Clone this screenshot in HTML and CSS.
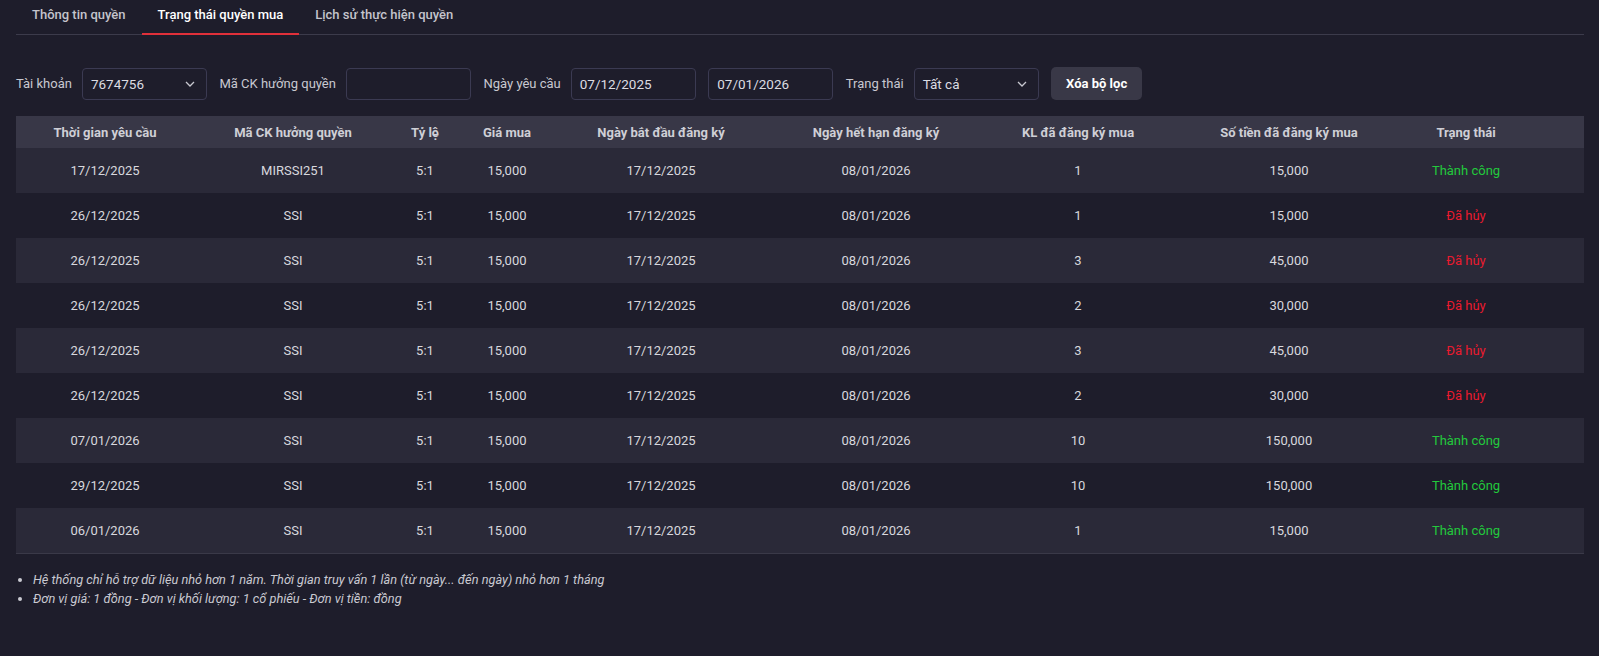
FILE: index.html
```html
<!DOCTYPE html>
<html lang="vi">

<head>
    <meta charset="UTF-8">
    <meta name="viewport" content="width=device-width, initial-scale=1.0">
    <title>Trạng thái quyền mua</title>
    <link rel="stylesheet" href="styles.css">
</head>

<body>
    <div class="page">
        <!-- tabs -->
        <div class="tabs">
            <div class="tab">Thông tin quyền</div>
            <div class="tab active">Trạng thái quyền mua</div>
            <div class="tab">Lịch sử thực hiện quyền</div>
        </div>

        <!-- bộ lọc -->
        <div class="filter">
            <label class="lbl">Tài khoản</label>
            <div class="field select">
                <span>7674756</span>
                <svg width="12" height="12" viewBox="0 0 12 12"><path d="M2 4l4 4 4-4" fill="none" stroke="#c8c8d0" stroke-width="1.3"/></svg>
            </div>
            <label class="lbl">Mã CK hưởng quyền</label>
            <div class="field"></div>
            <label class="lbl">Ngày yêu cầu</label>
            <div class="field">07/12/2025</div>
            <div class="field">07/01/2026</div>
            <label class="lbl">Trạng thái</label>
            <div class="field select">
                <span>Tất cả</span>
                <svg width="12" height="12" viewBox="0 0 12 12"><path d="M2 4l4 4 4-4" fill="none" stroke="#c8c8d0" stroke-width="1.3"/></svg>
            </div>
            <button class="btn-clear">Xóa bộ lọc</button>
        </div>

        <table class="grid">
            <colgroup>
                <col class="c1">
                <col class="c2">
                <col class="c3">
                <col class="c4">
                <col class="c5">
                <col class="c6">
                <col class="c7">
                <col class="c8">
                <col class="c9">
                <col class="c10">
            </colgroup>
            <thead>
                <tr>
                    <th>Thời gian yêu cầu</th>
                    <th>Mã CK hưởng quyền</th>
                    <th>Tỷ lệ</th>
                    <th>Giá mua</th>
                    <th>Ngày bắt đầu đăng ký</th>
                    <th>Ngày hết hạn đăng ký</th>
                    <th>KL đã đăng ký mua</th>
                    <th>Số tiền đã đăng ký mua</th>
                    <th>Trạng thái</th>
                    <th></th>
                </tr>
            </thead>
            <tbody>
                <tr><td>17/12/2025</td><td>MIRSSI251</td><td>5:1</td><td>15,000</td><td>17/12/2025</td><td>08/01/2026</td><td>1</td><td>15,000</td><td class="ok">Thành công</td><td></td></tr>
                <tr><td>26/12/2025</td><td>SSI</td><td>5:1</td><td>15,000</td><td>17/12/2025</td><td>08/01/2026</td><td>1</td><td>15,000</td><td class="cancel">Đã hủy</td><td></td></tr>
                <tr><td>26/12/2025</td><td>SSI</td><td>5:1</td><td>15,000</td><td>17/12/2025</td><td>08/01/2026</td><td>3</td><td>45,000</td><td class="cancel">Đã hủy</td><td></td></tr>
                <tr><td>26/12/2025</td><td>SSI</td><td>5:1</td><td>15,000</td><td>17/12/2025</td><td>08/01/2026</td><td>2</td><td>30,000</td><td class="cancel">Đã hủy</td><td></td></tr>
                <tr><td>26/12/2025</td><td>SSI</td><td>5:1</td><td>15,000</td><td>17/12/2025</td><td>08/01/2026</td><td>3</td><td>45,000</td><td class="cancel">Đã hủy</td><td></td></tr>
                <tr><td>26/12/2025</td><td>SSI</td><td>5:1</td><td>15,000</td><td>17/12/2025</td><td>08/01/2026</td><td>2</td><td>30,000</td><td class="cancel">Đã hủy</td><td></td></tr>
                <tr><td>07/01/2026</td><td>SSI</td><td>5:1</td><td>15,000</td><td>17/12/2025</td><td>08/01/2026</td><td>10</td><td>150,000</td><td class="ok">Thành công</td><td></td></tr>
                <tr><td>29/12/2025</td><td>SSI</td><td>5:1</td><td>15,000</td><td>17/12/2025</td><td>08/01/2026</td><td>10</td><td>150,000</td><td class="ok">Thành công</td><td></td></tr>
                <tr><td>06/01/2026</td><td>SSI</td><td>5:1</td><td>15,000</td><td>17/12/2025</td><td>08/01/2026</td><td>1</td><td>15,000</td><td class="ok">Thành công</td><td></td></tr>
            </tbody>
        </table>

        <ul class="notes">
            <li>Hệ thống chỉ hỗ trợ dữ liệu nhỏ hơn 1 năm. Thời gian truy vấn 1 lần (từ ngày... đến ngày) nhỏ hơn 1 tháng</li>
            <li>Đơn vị giá: 1 đồng - Đơn vị khối lượng: 1 cổ phiếu - Đơn vị tiền: đồng</li>
        </ul>
    </div>
</body>

</html>
```

FILE: styles.css
```css
html,
body {
    margin: 0;
    background-color: #1e1d2b;
}

body {
    font-family: Roboto, "Liberation Sans", sans-serif;
    font-size: 13px;
    color: #d4d4dc;
}

.page {
    padding: 0 15px 0 16px;
}

.tabs {
    display: flex;
    border-bottom: 1px solid #3c3b4b;
    height: 34px;
}

.tab {
    padding: 7px 16px 0 16px;
    color: #c4c4cc;
    font-weight: 500;
    box-sizing: border-box;
    height: 35px;
}

.tab.active {
    color: #ffffff;
    border-bottom: 2px solid #e0303a;
}

.filter {
    display: flex;
    align-items: center;
    margin-top: 32px;
    height: 33px;
}

.lbl {
    color: #c8c8d0;
    margin-right: 10px;
}

.field {
    box-sizing: border-box;
    width: 125px;
    height: 32px;
    border: 1px solid #3b3a52;
    border-radius: 4px;
    padding: 0 8px;
    display: flex;
    align-items: center;
    justify-content: space-between;
    color: #dcdce2;
    margin-right: 12.5px;
    font-size: 13.5px;
}

.select svg {
    margin-right: 2px;
}

.btn-clear {
    height: 33px;
    width: 91px;
    border: none;
    border-radius: 5px;
    background-color: #393847;
    color: #ffffff;
    font-family: inherit;
    font-weight: 700;
    font-size: 13px;
}

.grid {
    width: 100%;
    margin-top: 16px;
    border-collapse: collapse;
    table-layout: fixed;
    border-bottom: 1px solid #3a3948;
}

.c1 { width: 178px; }
.c2 { width: 198px; }
.c3 { width: 66px; }
.c4 { width: 98px; }
.c5 { width: 210px; }
.c6 { width: 220px; }
.c7 { width: 184px; }
.c8 { width: 238px; }
.c9 { width: 116px; }
.c10 { width: 60px; }

.grid th {
    height: 32px;
    background-color: #383747;
    color: #cfcfd6;
    font-weight: 700;
    font-size: 13px;
    padding: 0;
}

.grid td {
    height: 45px;
    text-align: center;
    padding: 0;
    color: #d8d8de;
}

.grid tbody tr:nth-child(odd) {
    background-color: #2a2938;
}

.ok {
    color: #22c93c !important;
}

.cancel {
    color: #ea1a2e !important;
}

.notes {
    margin: 16px 0 0 0;
    padding-left: 17px;
    font-style: italic;
    font-size: 12.75px;
    color: #cacad2;
    line-height: 19px;
}
```
